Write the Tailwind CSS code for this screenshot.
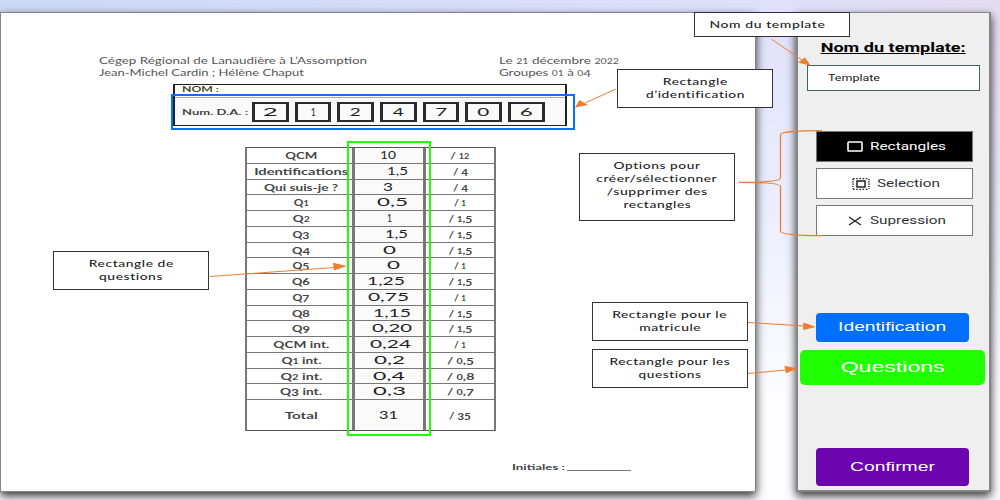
<!DOCTYPE html>
<html lang="fr">
<head>
<meta charset="utf-8">
<title>Nom du template</title>
<script src="https://cdn.jsdelivr.net/npm/@tailwindcss/browser@4"></script>
</head>
<body class="w-[1000px] h-[500px] overflow-hidden">
<div class="relative w-[1000px] h-[500px] overflow-hidden bg-white font-['Lato',sans-serif]">
  <div class="absolute inset-0 bg-linear-to-r from-[#cbd9f5] via-[#dfe0fc] via-75% to-[#e4ddf2]"></div>
  <div class="absolute inset-0 bg-linear-to-b from-transparent via-[#f0f3ff]/80 via-45% to-[#fdfdff] to-80%"></div>

  <div class="relative flex gap-[40px] pt-[12px]">
    <!-- Exam page -->
    <main class="w-[756px] h-[480px] shrink-0 bg-white border border-[#858585] shadow-[0_4px_9px_rgba(0,0,0,0.8)] text-[#444]">
      <header class="flex mt-[42px] ml-[98px] text-[8.5px] leading-[12px] text-[#555]">
        <div class="w-[400px]">
          <div class="h-[12px]"><span data-w="268" class="inline-block whitespace-nowrap origin-left">Cégep Régional de Lanaudière à L’Assomption</span></div>
          <div class="h-[12px]"><span data-w="205" class="inline-block whitespace-nowrap origin-left">Jean-Michel Cardin ; Hélène Chaput</span></div>
        </div>
        <div>
          <div class="h-[12px]"><span data-w="120" data-old class="inline-block whitespace-nowrap origin-left">Le 21 décembre 2022</span></div>
          <div class="h-[12px]"><span data-w="92" data-old class="inline-block whitespace-nowrap origin-left">Groupes 01 à 04</span></div>
        </div>
      </header>

      <section class="relative mt-[5px] ml-[172px] w-[394px] h-[42px] border-x-2 border-y border-[#222] text-[8px] font-bold">
        <div class="h-[13px] leading-[9px] border-b border-[#aaa] pl-[7px]"><span data-w="37" class="inline-block whitespace-nowrap origin-left">NOM :</span></div>
        <div class="flex items-center h-[27px] bg-[#fafafa] pl-[7px]">
          <div class="w-[70px] shrink-0"><span data-w="66" class="inline-block whitespace-nowrap origin-left">Num. D.A. :</span></div>
          <div id="digits" class="flex gap-[6px] text-[11.5px] font-normal text-[#222]"></div>
        </div>
        <div class="absolute -left-[4px] top-[9px] w-[404px] h-[36px] border-2 border-[#0d6efd]"></div>
      </section>

      <section class="relative mt-[21px] ml-[244px] w-[251px]">
        <div id="rows" class="border-2 border-t border-b border-[#777] border-t-[#555] border-b-[#555]"></div>
        <div class="absolute left-[102px] -top-[6px] w-[84px] h-[295px] border-[2.5px] border-[#1fff00]"></div>
      </section>

      <footer class="flex items-end mt-[31px] ml-[511px] text-[8px] leading-[10px] font-bold">
        <div class="w-[55px] h-[10px] overflow-hidden"><span data-w="53" class="inline-block whitespace-nowrap origin-left">Initiales :</span></div>
        <div class="w-[64px] h-px mb-px bg-[#777]"></div>
      </footer>
    </main>

    <!-- Tool panel -->
    <aside class="flex flex-col items-center w-[195px] h-[480px] shrink-0 bg-[#efefef] border border-[#858585] border-x-2 border-b-2 shadow-[0_4px_9px_rgba(0,0,0,0.8)] font-['Roboto',sans-serif]">
      <h1 class="mt-[27px] h-[16px] leading-[16px] text-[12px] font-bold text-black underline"><span data-w="145" class="inline-block whitespace-nowrap underline">Nom du template:</span></h1>
      <div class="mt-[9px] w-[173px] h-[26px] -ml-[3px] mr-[-2px] bg-white border border-[#3f6466] pl-[20px] leading-[24px] text-[9px] text-[#222]"><span data-w="52" class="inline-block whitespace-nowrap origin-left">Template</span></div>
      <div class="flex flex-col gap-[6px] mt-[40px] ml-[2px] text-[10.5px] text-[#333]">
        <button class="flex items-center w-[157px] h-[31px] bg-black border border-[#777] text-white pl-[30px]">
          <svg class="w-[16px] h-[11px] shrink-0" viewBox="0 0 16 11"><rect x="1" y="1" width="14" height="9" rx="0.8" fill="none" stroke="#fff" stroke-width="1.6"/></svg>
          <span data-w="76" class="inline-block whitespace-nowrap origin-left ml-[7px]">Rectangles</span>
        </button>
        <button class="flex items-center w-[157px] h-[31px] bg-white border border-[#777] pl-[35px]">
          <svg class="w-[18px] h-[12px] shrink-0" viewBox="0 0 18 12" fill="none" stroke="#222"><rect x="5" y="3" width="8" height="6" stroke-width="1.5"/><path d="M1 .7H17M1 11.3H17" stroke-width="1.2" stroke-dasharray="1.6 1.6"/><path d="M1 1V11M17 1V11" stroke-width="1.5" stroke-dasharray="1.2 1.1"/></svg>
          <span data-w="63" class="inline-block whitespace-nowrap origin-left ml-[7px]">Selection</span>
        </button>
        <button class="flex items-center w-[157px] h-[31px] bg-white border border-[#777] pl-[31px]">
          <svg class="w-[14px] h-[10px] shrink-0" viewBox="0 0 14 10"><path d="M1 1 13 9M13 1 1 9" stroke="#222" stroke-width="1.4"/></svg>
          <span data-w="76" class="inline-block whitespace-nowrap origin-left ml-[8px]">Supression</span>
        </button>
      </div>
      <div class="flex flex-col items-center mt-[77px] ml-[-2px] font-['Liberation_Sans',sans-serif] text-white">
        <button class="w-[153px] h-[29px] rounded-[4px] bg-[#006eff] text-[12.5px]"><span data-w="108" class="inline-block whitespace-nowrap">Identification</span></button>
        <button class="mt-[8px] w-[185px] h-[35px] rounded-[5px] bg-[#1fff00] text-[14.5px]"><span data-w="104" class="inline-block whitespace-nowrap">Questions</span></button>
        <button class="mt-[63px] w-[153px] h-[38px] rounded-[4px] bg-[#6c04af] text-[12.5px]"><span data-w="85" class="inline-block whitespace-nowrap">Confirmer</span></button>
      </div>
    </aside>
  </div>

  <!-- Annotations laid over the page -->
  <div class="text-center text-[9.5px] leading-[13px] font-medium tracking-[0.4px] text-[#222]">
    <div class="absolute left-[694px] top-[12px] w-[156px] h-[25px] bg-white border border-[#333] pt-[5px]"><span data-w="116" class="inline-block whitespace-nowrap -ml-[10px]">Nom du template</span></div>
    <div class="absolute left-[617px] top-[69px] w-[156px] h-[39px] bg-white border border-[#333] pt-[5px]"><span data-w="65" class="inline-block whitespace-nowrap">Rectangle</span><br><span data-w="99" class="inline-block whitespace-nowrap">d’identification</span></div>
    <div class="absolute left-[579px] top-[153px] w-[156px] h-[68px] bg-white border border-[#333] pt-[5px]"><span data-w="87" class="inline-block whitespace-nowrap">Options pour</span><br><span data-w="121" class="inline-block whitespace-nowrap">créer/sélectionner</span><br><span data-w="101" class="inline-block whitespace-nowrap">/supprimer des</span><br><span data-w="68" class="inline-block whitespace-nowrap">rectangles</span></div>
    <div class="absolute left-[592px] top-[302px] w-[156px] h-[39px] bg-white border border-[#333] pt-[5px]"><span data-w="115" class="inline-block whitespace-nowrap">Rectangle pour le</span><br><span data-w="62" class="inline-block whitespace-nowrap">matricule</span></div>
    <div class="absolute left-[592px] top-[349px] w-[156px] h-[39px] bg-white border border-[#333] pt-[5px]"><span data-w="121" class="inline-block whitespace-nowrap">Rectangle pour les</span><br><span data-w="63" class="inline-block whitespace-nowrap">questions</span></div>
    <div class="absolute left-[53px] top-[251px] w-[156px] h-[39px] bg-white border border-[#333] pt-[5px]"><span data-w="85" class="inline-block whitespace-nowrap">Rectangle de</span><br><span data-w="64" class="inline-block whitespace-nowrap">questions</span></div>
  </div>
  <svg class="absolute inset-0 w-[1000px] h-[500px]" viewBox="0 0 1000 500">
    <g fill="none" stroke="#ed7d31" stroke-width="1">
      <path d="M772 39.500 802 60M616 89 585 103M210 276.500 335 267.500M748 322.500 805 326M748 373.500 786 370"/>
      <path d="M822 130.700C800 130.700 780.500 132 780.500 134.500V178C780.500 181 767 182.300 739 182.300C767 182.300 780.500 183.500 780.500 186.500V231C780.500 234.500 800 235.700 822 235.700" stroke-width="1.300"/>
    </g>
    <g fill="#ed7d31">
      <path d="M811 66 798 62.500 805 57.500ZM575 107.500 579.500 100 588 105ZM347 266 333 262.800 334 270.500ZM816 327 803.500 322.500 803 330ZM798 368.500 784.500 365.800 786 373.200Z"/>
    </g>
  </svg>
</div>
<script>
  // Old-style figures: 0, 1, 2 at x-height; 3, 4, 5, 7, 9 below the baseline
  const old = t => t
    .replace(/[0-9]/g, d => '012'.includes(d) ? `<span class="text-[0.78em]">${d}</span>`
      : '34579'.includes(d) ? `<span class="relative top-[1px]">${d}</span>` : d);
  document.querySelectorAll('[data-old]').forEach(e => { e.innerHTML = old(e.textContent); });

  // Digits of the student number: value and drawn width
  const digits = [['2', 15], ['1', 5], ['2', 11], ['4', 11], ['7', 12], ['0', 12], ['6', 13]];
  document.getElementById('digits').innerHTML = digits.map(([d, w]) =>
    `<div class="flex items-center justify-center w-[36.7px] h-[20px] border-2 border-x-[3px] border-[#2b2b2b] leading-[14px]"><span data-w="${w}" class="inline-block">${d}</span></div>`).join('');

  // label, label width, score, score offset, score width, maximum, maximum width
  const rows = [
    ['QCM', 32, '10', 27, 16, '/ 12', 19], ['Identifications', 94, '1,5', 34, 21, '/ 4', 15],
    ['Qui suis-je ?', 74, '3', 30, 10, '/ 4', 15], ['Q1', 15, '0,5', 24, 31, '/ 1', 12],
    ['Q2', 17, '1', 34, 5, '/ 1,5', 24], ['Q3', 17, '1,5', 32, 23, '/ 1,5', 24],
    ['Q4', 18, '0', 30, 13, '/ 1,5', 24], ['Q5', 17, '0', 34, 13, '/ 1', 12],
    ['Q6', 18, '1,25', 14, 38, '/ 1,5', 24], ['Q7', 17, '0,75', 15, 41, '/ 1', 12],
    ['Q8', 18, '1,15', 20, 38, '/ 1,5', 24], ['Q9', 18, '0,20', 19, 40, '/ 1,5', 24],
    ['QCM int.', 56, '0,24', 17, 41, '/ 1', 12], ['Q1 int.', 40, '0,2', 21, 31, '/ 0,5', 27],
    ['Q2 int.', 42, '0,4', 20, 32, '/ 0,8', 28], ['Q3 int.', 42, '0,3', 20, 33, '/ 0,7', 27],
    ['Total', 33, '31', 26, 19, '/ 35', 22]
  ];
  document.getElementById('rows').innerHTML = rows.map(([l, lw, s, so, sw, m, mw], i) =>
    `<div class="flex ${i === 16 ? 'h-[30px]' : 'h-[15.75px] border-b border-[#777]'} text-[8.5px] font-bold">
      <div class="flex items-center justify-center w-[105px] pt-[2px] pl-[3px]"><span data-w="${lw}" class="inline-block whitespace-nowrap">${old(l)}</span></div>
      <div class="flex items-center w-[74px] bg-[#fafafa] border-x-[3px] border-[#777] text-[10.5px] font-normal text-[#222] pt-px"><span data-w="${sw}" style="margin-left:${so - 2}px" class="inline-block whitespace-nowrap origin-left">${s}</span></div>
      <div class="flex items-center justify-center w-[68px] pt-[2px]"><span data-w="${mw}" class="inline-block whitespace-nowrap">${old(m)}</span></div>
    </div>`).join('');

  // Widen each label to its own width, again whenever its font or size changes
  const fit = e => {
    const w = parseFloat(getComputedStyle(e).width);
    if (w > 0) e.style.transform = `scaleX(${e.dataset.w / w})`;
  };
  const fitAll = () => document.querySelectorAll('[data-w]').forEach(fit);
  const observer = new ResizeObserver(list => list.forEach(x => fit(x.target)));
  document.querySelectorAll('[data-w]').forEach(e => observer.observe(e));
  window.addEventListener('load', fitAll);
  document.fonts.ready.then(fitAll);
</script>
</body>
</html>
